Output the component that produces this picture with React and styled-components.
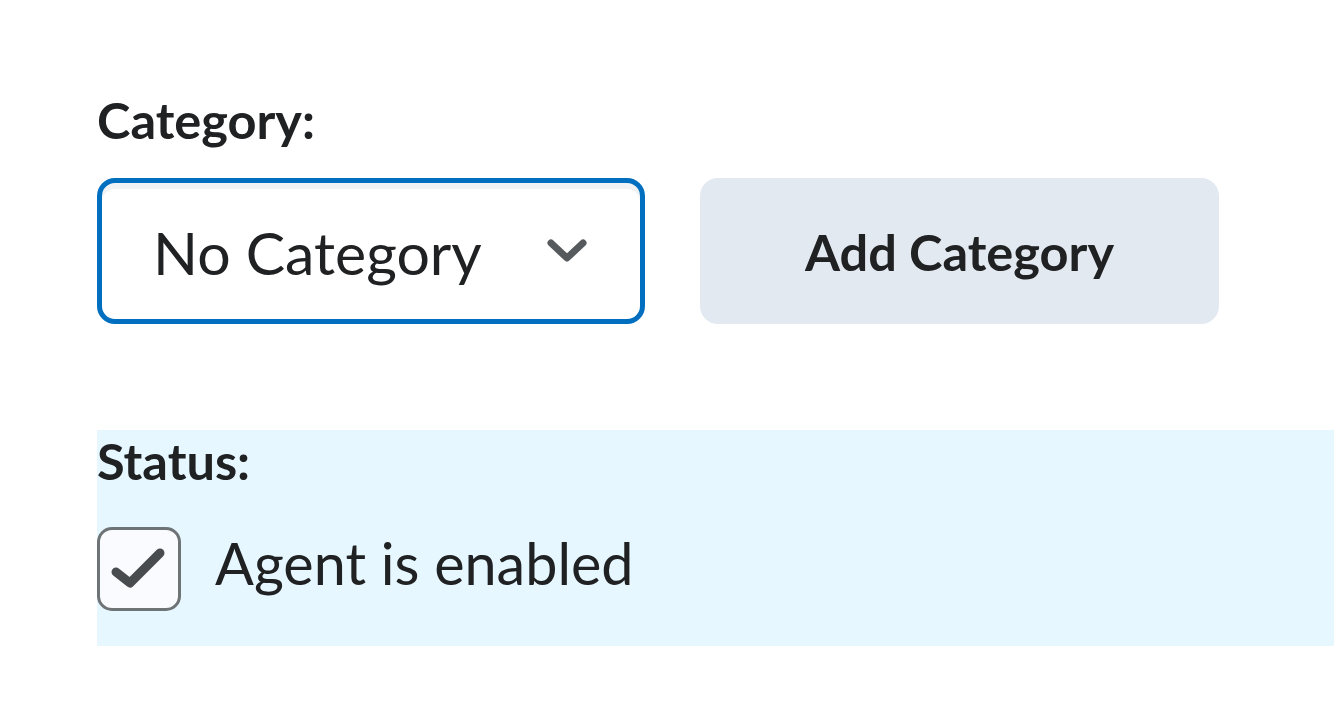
import React from 'react';
import styled, { createGlobalStyle } from 'styled-components';

const GlobalStyle = createGlobalStyle`
  html, body {
    margin: 0;
    padding: 0;
    background: #ffffff;
    overflow: hidden;
  }
  body {
    font-family: Lato, "Noto Sans", sans-serif;
    color: #202122;
  }
`;

const Page = styled.div`
  padding: 89px 0 0 97px;
  display: flex;
  flex-direction: column;
`;

const Label = styled.div`
  font-size: 50.5px;
  font-weight: 700;
  line-height: 62px;
  color: #202122;
`;

const FieldRow = styled.div`
  display: flex;
  gap: 55px;
  margin-top: 27px;
`;

const Select = styled.div`
  box-sizing: border-box;
  width: 548px;
  height: 146px;
  border: 5px solid #006fbf;
  border-radius: 18px;
  box-shadow: inset 0 6px 0 0 rgba(177, 185, 190, 0.18);
  background: #ffffff;
  display: flex;
  align-items: center;
  justify-content: space-between;
  padding: 0 51px 0 51px;
  font-size: 59px;
  line-height: 70px;
  color: #202122;
`;

const SelectText = styled.span`
  margin-top: 4px;
`;

const Button = styled.div`
  box-sizing: border-box;
  width: 519px;
  height: 146px;
  border-radius: 18px;
  background: #e3e9f1;
  display: flex;
  align-items: center;
  justify-content: center;
  font-size: 50.5px;
  font-weight: 700;
  color: #202122;
`;

const StatusSection = styled.div`
  margin-top: 106px;
  background: #e6f7ff;
  padding-bottom: 35px;
  width: calc(100vw - 97px + 40px);
`;

const CheckRow = styled.div`
  display: flex;
  align-items: flex-start;
  gap: 34px;
  margin-top: 35px;
`;

const CheckBox = styled.div`
  box-sizing: border-box;
  width: 84px;
  height: 84px;
  border: 3px solid #6e7376;
  border-radius: 15px;
  background: #f9fbff;
  display: flex;
  align-items: center;
  justify-content: center;
  flex-shrink: 0;
`;

const CheckLabel = styled.span`
  font-size: 57.5px;
  line-height: 70px;
  color: #202122;
  margin-top: 1px;
`;

const Chevron = () => (
  <svg width="44" height="30" viewBox="0 0 44 30">
    <polyline
      points="6,7 22,22 38,7"
      fill="none"
      stroke="#565a5c"
      strokeWidth="7"
      strokeLinecap="round"
      strokeLinejoin="round"
    />
  </svg>
);

const CheckMark = () => (
  <svg width="78" height="78" viewBox="3 3 78 78">
    <polyline
      points="19,45 33,56 63,26"
      fill="none"
      stroke="#494c4e"
      strokeWidth="9"
      strokeLinecap="round"
      strokeLinejoin="round"
    />
  </svg>
);

export default function App() {
  return (
    <>
      <GlobalStyle />
      <Page>
        <Label>Category:</Label>
        <FieldRow>
          <Select>
            <SelectText>No Category</SelectText>
            <Chevron />
          </Select>
          <Button>Add Category</Button>
        </FieldRow>
        <StatusSection>
          <Label>Status:</Label>
          <CheckRow>
            <CheckBox>
              <CheckMark />
            </CheckBox>
            <CheckLabel>Agent is enabled</CheckLabel>
          </CheckRow>
        </StatusSection>
      </Page>
    </>
  );
}
